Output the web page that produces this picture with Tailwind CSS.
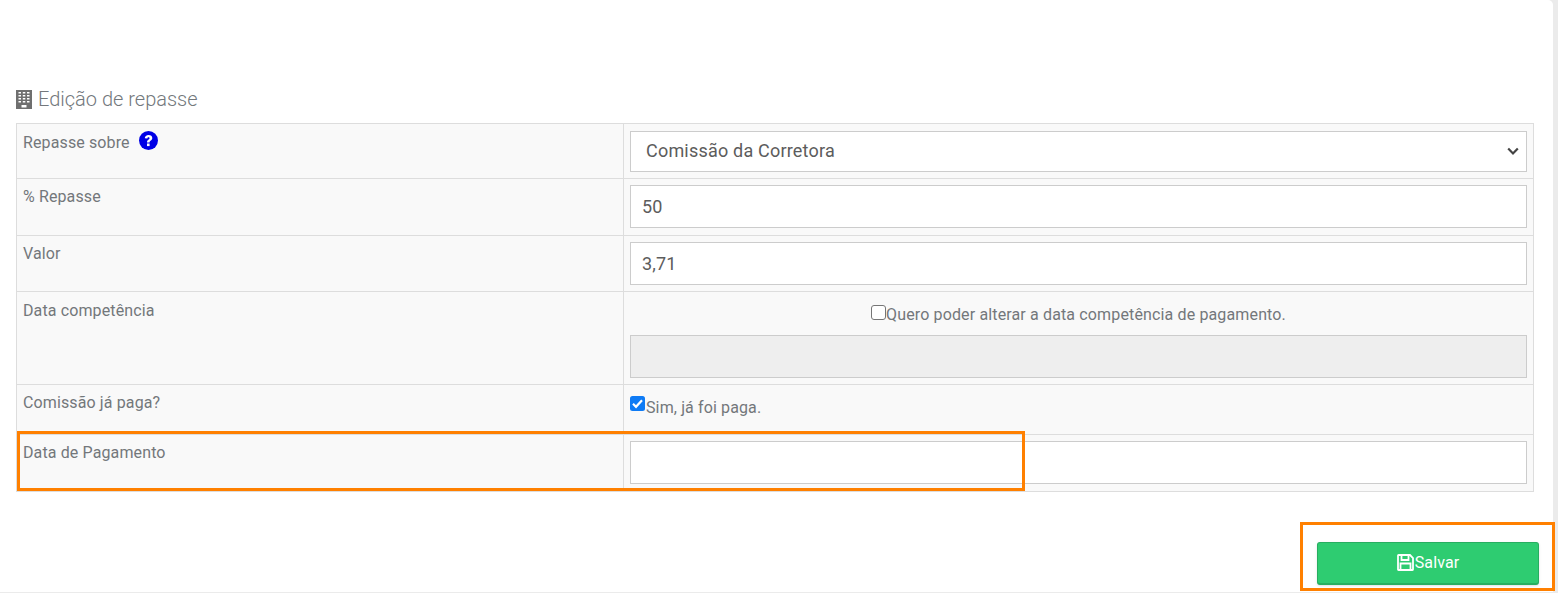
<!DOCTYPE html>
<html>
<head>
<meta charset="utf-8">
<script src="https://cdn.jsdelivr.net/npm/@tailwindcss/browser@4"></script>
</head>
<body class="bg-white">
<div class="relative w-[1558px] h-[593px] overflow-hidden bg-[#ebebeb] font-['Roboto',sans-serif] text-[#73879c] ">
  <div class="w-[1553px] h-[592px] bg-white rounded-tr-[5px] pt-[87px] pl-[16px]">
    <h2 class="flex items-center h-[24px] mb-[12px] text-[20px] font-light text-[#73787c]">
      <svg class="w-[16px] h-[19px] mr-[6px]" viewBox="0 0 16 19"><path fill="#6f6f6f" fill-rule="evenodd" d="M0 0h16v19H0zM2.500 2h2.500v1.500H2.500zM6.800 2h2.500v1.500H6.800zM11 2h2.500v1.500H11zM2.500 5h2.500v1.500H2.500zM6.800 5h2.500v1.500H6.800zM11 5h2.500v1.500H11zM2.500 8h2.500v1.500H2.500zM6.800 8h2.500v1.500H6.800zM11 8h2.500v1.500H11zM2.500 11h2.500v1.500H2.500zM6.800 11h2.500v1.500H6.800zM11 11h2.500v1.500H11zM5.500 15h5v2.500h-5z"/></svg>
      Edição de repasse
    </h2>
    <div class="w-[1518px] border border-[#dddddd] bg-[#f9f9f9] text-[16px] text-[#73777b] tracking-[0.12px] grid grid-cols-[607px_1fr]">
      <div class="h-[55px] border-r border-b border-[#dddddd] px-[6px] pt-[7px] flex items-start gap-[9px]">
        <span class="leading-[22px] mt-[1px]">Repasse sobre</span>
        <svg class="w-[19px] h-[19px]" viewBox="0 0 19 19"><circle cx="9.500" cy="9.500" r="9.500" fill="#0000e6"/><path d="M5.800 7.300c0-2 1.600-3.300 3.800-3.300 2.200 0 3.700 1.200 3.700 3 0 2.500-2.700 2.400-2.700 4.500H8c0-3 2.500-2.700 2.500-4.300 0-.6-.4-1-1-1-.7 0-1.100.5-1.100 1.200z" fill="#fff"/><rect x="8" y="12.500" width="2.600" height="2.600" fill="#fff"/></svg>
      </div>
      <div class="h-[55px] border-b border-[#dddddd] px-[6px] pt-[7px]">
        <div class="relative h-[41px] border border-[#cccccc] bg-white pl-[15px] pb-[2px] flex items-center text-[18px] tracking-[0.2px] text-[#5c5c5c]">Comissão da Corretora
          <svg class="absolute right-[7px] top-[15px] w-[12px] h-[9px]" viewBox="0 0 12 9"><path d="M1.200 1.500 6 6.500l4.800-5" fill="none" stroke="#444" stroke-width="2.200"/></svg>
        </div>
      </div>

      <div class="h-[57px] border-r border-b border-[#dddddd] px-[6px] pt-[7px] leading-[22px]">% Repasse</div>
      <div class="h-[57px] border-b border-[#dddddd] px-[6px] pt-[6px]">
        <div class="h-[43px] border border-[#cccccc] bg-white pl-[11px] flex items-center text-[18px] text-[#5c5c5c]">50</div>
      </div>

      <div class="h-[56px] border-r border-b border-[#dddddd] px-[6px] pt-[7px] leading-[22px]">Valor</div>
      <div class="h-[56px] border-b border-[#dddddd] px-[6px] pt-[6px]">
        <div class="h-[43px] border border-[#cccccc] bg-white pl-[11px] flex items-center text-[18px] text-[#5c5c5c]">3,71</div>
      </div>

      <div class="h-[93px] border-r border-b border-[#dddddd] px-[6px] pt-[8px] leading-[22px]">Data competência</div>
      <div class="h-[93px] border-b border-[#dddddd] px-[6px] pt-[12px]">
        <div class="h-[22px] flex items-center justify-center">
          <span class="w-[15px] h-[15px] border border-[#767676] rounded-[3px] bg-white mb-[5px]"></span><span class="tracking-[0.14px]">Quero poder alterar a data competência de pagamento.</span>
        </div>
        <div class="mt-[9px] h-[43px] border border-[#cccccc] bg-[#eeeeee]"></div>
      </div>

      <div class="h-[50px] border-r border-b border-[#dddddd] px-[6px] pt-[7px] leading-[22px]">Comissão já paga?</div>
      <div class="h-[50px] border-b border-[#dddddd] px-[6px] pt-[11px] flex items-start">
        <svg class="w-[15px] h-[15px]" viewBox="0 0 15 15"><rect width="15" height="15" rx="2.500" fill="#0f7bf5"/><path d="M3 7.800 6 10.800 12 4.200" fill="none" stroke="#fff" stroke-width="2.200"/></svg>
        <span class="leading-[22px] mt-[1px] ml-[1px]">Sim, já foi paga.</span>
      </div>

      <div class="h-[56px] border-r border-[#dddddd] px-[6px] pt-[7px] leading-[22px]">Data de Pagamento</div>
      <div class="h-[56px] px-[6px] pt-[6px]">
        <div class="h-[43px] border border-[#cccccc] bg-white"></div>
      </div>
    </div>
    <div class="flex justify-end w-[1523px] mt-[50px]">
      <button class="w-[222px] h-[43px] rounded-[3px] bg-[#2ecc71] border border-[#27ae60] border-b-[2px] shadow-sm flex items-center justify-center text-white text-[16px] tracking-[0.1px]">
        <svg class="w-[17px] h-[17px] mr-[1px] mb-[2px]" viewBox="0 0 17 17"><path fill="none" stroke="#fff" stroke-width="1.800" d="M1.500 1h11.500l3 3v11.500a.5.5 0 0 1-.5.500h-14a.5.5 0 0 1-.5-.5v-14a.5.5 0 0 1 .5-.5zM4.500 1v5h7V1M3.500 16v-6.500h10V16"/></svg>
        Salvar
      </button>
    </div>
  </div>
  <div class="absolute left-[17px] top-[431px] w-[1008px] h-[60px] border-[3px] border-[#ff8000]"></div>
  <div class="absolute left-[1300px] top-[522px] w-[255px] h-[69px] border-[3px] border-[#ff8000]"></div>
</div>
</body>
</html>
